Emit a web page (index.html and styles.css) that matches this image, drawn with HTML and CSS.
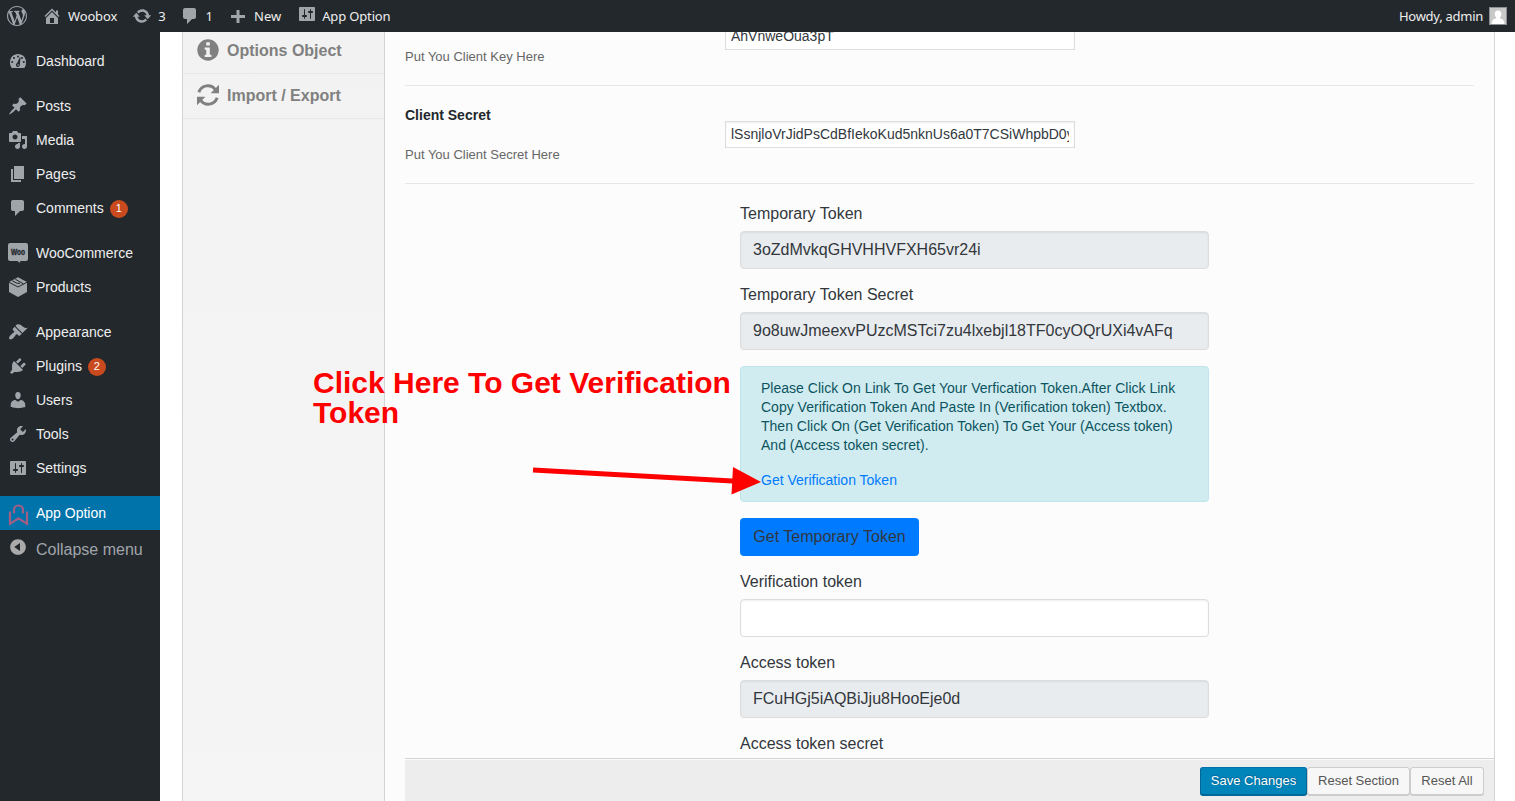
FILE: index.html
```html
<!DOCTYPE html>
<html lang="en">
<head>
<meta charset="utf-8">
<title>App Option</title>
<link rel="stylesheet" href="styles.css">
</head>
<body>
<svg class="defs" width="0" height="0">
  <symbol id="gear" viewBox="0 0 20 20"><path d="M18 16V4c0-.55-.45-1-1-1H3c-.55 0-1 .45-1 1v12c0 .55.45 1 1 1h14c.55 0 1-.45 1-1zM8 11h1c.55 0 1 .45 1 1s-.45 1-1 1H8v1.500c0 .28-.22.5-.5.5s-.5-.22-.5-.5V13H6c-.55 0-1-.45-1-1s.45-1 1-1h1V5.500c0-.28.22-.5.5-.5s.5.22.5.5V11zm5-2h-1c-.55 0-1-.45-1-1s.45-1 1-1h1V5.500c0-.28.22-.5.5-.5s.5.22.5.5V7h1c.55 0 1 .45 1 1s-.45 1-1 1h-1v5.500c0 .28-.22.5-.5.5s-.5-.22-.5-.5V9z"/></symbol>
  <symbol id="bubble" viewBox="0 0 20 20"><path d="M5 2h9c1.100 0 2 .9 2 2v7c0 1.100-.9 2-2 2h-2l-5 5v-5H5c-1.100 0-2-.9-2-2V4c0-1.100.9-2 2-2z"/></symbol>
</svg>
<header class="bar">
  <div class="bar-item logo"><svg viewBox="0 0 20 20"><path d="M20 10c0-5.510-4.490-10-10-10C4.480 0 0 4.490 0 10c0 5.520 4.480 10 10 10 5.510 0 10-4.480 10-10zM7.780 15.370L4.370 6.220c.55-.02 1.170-.08 1.170-.08.5-.06.44-1.130-.06-1.110 0 0-1.450.11-2.370.11-.18 0-.37 0-.58-.01C4.120 2.690 6.870 1.110 10 1.110c2.330 0 4.450.87 6.050 2.340-.68-.11-1.650.39-1.650 1.580 0 .74.45 1.360.9 2.100.35.61.55 1.360.55 2.460 0 1.490-1.400 5-1.400 5l-3.030-8.370c.54-.02.82-.17.82-.17.5-.05.44-1.250-.06-1.220 0 0-1.440.12-2.380.12-.87 0-2.330-.12-2.330-.12-.5-.03-.56 1.200-.06 1.220l.92.08 1.260 3.410zM17.410 10c.24-.64.74-1.870.43-4.250.7 1.290 1.050 2.710 1.050 4.250 0 3.290-1.730 6.240-4.400 7.780.97-2.590 1.940-5.200 2.920-7.780zM6.100 18.090C3.120 16.650 1.110 13.530 1.110 10c0-1.300.23-2.480.72-3.590C3.250 10.300 4.670 14.200 6.100 18.090zm4.030-6.630l2.580 6.980c-.86.29-1.760.45-2.710.45-.79 0-1.570-.11-2.290-.33.81-2.380 1.620-4.740 2.420-7.100z"/></svg></div>
  <div class="bar-item home"><svg viewBox="0 0 20 20"><path d="M16 8.500l1.530 1.530-1.060 1.060L10 4.600l-6.470 6.490-1.060-1.060L10 2.500l4 4v-2h2v4zm-6-2.460l6 5.990V18H4v-5.970zM12 17v-5H8v5h4z"/></svg><span>Woobox</span></div>
  <div class="bar-item updates"><svg viewBox="0 0 20 20"><path d="M10.200 3.280c3.530 0 6.430 2.610 6.920 6h2.080l-3.500 4-3.500-4h2.320c-.45-1.970-2.210-3.450-4.320-3.450-1.450 0-2.730.71-3.540 1.780L4.950 5.660C6.230 4.200 8.110 3.280 10.200 3.280zm-.4 13.440c-3.520 0-6.430-2.610-6.920-6H.8l3.500-4c1.170 1.330 2.330 2.670 3.500 4H5.480c.45 1.970 2.210 3.450 4.320 3.450 1.450 0 2.730-.71 3.540-1.780l1.710 1.950c-1.280 1.460-3.150 2.380-5.250 2.380z"/></svg><span>3</span></div>
  <div class="bar-item replies"><svg viewBox="0 0 20 20"><use href="#bubble"/></svg><span>1</span></div>
  <div class="bar-item new"><svg viewBox="0 0 20 20"><path d="M17 9v3h-5.500v5h-3v-5H3V9h5.500V4h3v5z"/></svg><span>New</span></div>
  <div class="bar-item option"><svg viewBox="0 0 20 20"><use href="#gear"/></svg><span>App Option</span></div>
  <div class="bar-item account"><span>Howdy, admin</span><svg class="avatar" viewBox="0 0 18 18"><path fill="#8c8f94" d="M0 0h18v18H0z"/><path fill="#c8c8c8" d="M1 1h16v16H1z"/><path fill="#fff" d="M9 3.500c2.500 0 3.600 1.700 3.300 4-.2 1.300-.8 2.200-1.300 2.800v1c2.800.6 4.300 2.200 4.500 5.700h-13c.2-3.500 1.700-5.100 4.500-5.700v-1C6.500 9.700 5.900 8.800 5.700 7.500c-.3-2.300.8-4 3.300-4z"/></svg></div>
</header>
<div class="shell">
  <nav class="menu">
    <div class="item"><svg viewBox="0 0 20 20"><path d="M3.760 17h12.480c1.340-1.630 1.760-3.730 1.760-6 0-4.410-3.580-8-8-8s-8 3.590-8 8c0 2.270.42 4.370 1.760 6z"/><g class="cut"><circle cx="10" cy="5.500" r="1"/><circle cx="6" cy="7" r="1"/><circle cx="14" cy="7" r="1"/><circle cx="4.200" cy="11" r="1"/><circle cx="15.800" cy="11" r="1"/><path d="M11.800 6.200l.8.300-.8 6.800a2 2 0 1 1-2.600-1.200z"/></g><circle cx="10" cy="14" r=".8"/></svg><span>Dashboard</span></div>
    <div class="item gap"><svg viewBox="0 0 20 20"><path d="M10.440 3.020l1.820-1.820 6.360 6.350-1.830 1.820c-1.050-.68-2.480-.57-3.410.36l-.75.75c-.92.93-1.040 2.350-.35 3.410l-1.830 1.820-2.410-2.410-2.800 2.790c-.42.42-3.380 2.710-3.800 2.290s1.860-3.390 2.280-3.810l2.790-2.790L4.100 9.360l1.830-1.820c1.050.69 2.480.57 3.400-.36l.75-.75c.93-.92 1.050-2.350.36-3.410z"/></svg><span>Posts</span></div>
    <div class="item"><svg viewBox="0 0 20 20"><path d="M13 11V4c0-.55-.45-1-1-1h-1.670L9 1H5L3.670 3H2c-.55 0-1 .45-1 1v7c0 .55.45 1 1 1h10c.55 0 1-.45 1-1zM7 4.500c1.380 0 2.500 1.120 2.500 2.500S8.380 9.500 7 9.500 4.500 8.380 4.500 7 5.620 4.500 7 4.500zM14 6h5v10.500c0 1.380-1.120 2.500-2.500 2.500S14 17.880 14 16.500s1.120-2.500 2.500-2.500c.17 0 .34.02.5.05V9h-3V6zm-4 8.050V13h2v3.500c0 1.380-1.120 2.500-2.500 2.500S7 17.880 7 16.500 8.120 14 9.500 14c.17 0 .34.02.5.05z"/></svg><span>Media</span></div>
    <div class="item"><svg viewBox="0 0 20 20"><path d="M6 15V2h10v13H6zm-1 1h8v2H3V5h2v11z"/></svg><span>Pages</span></div>
    <div class="item"><svg viewBox="0 0 20 20"><use href="#bubble"/></svg><span>Comments</span><b class="count">1</b></div>
    <div class="item gap"><svg viewBox="0 0 20 20"><path d="M2 0h16a2 2 0 0 1 2 2v14a2 2 0 0 1-2 2h-6l.3 2-3-2H2a2 2 0 0 1-2-2V2a2 2 0 0 1 2-2z"/><text class="woo" x="3" y="11.800" textLength="14" lengthAdjust="spacingAndGlyphs">Woo</text></svg><span>WooCommerce</span></div>
    <div class="item"><svg viewBox="0 0 20 20"><path d="M10 .3l9 4.700v10L10 20l-9-5V5z"/><path class="seam" d="M1 5.300l9 4.700 9-4.700M4.300 3.800l4.500 2.400 3.200.2M7.300 2.200l8 4.600"/></svg><span>Products</span></div>
    <div class="item gap"><svg viewBox="0 0 20 20"><path d="M14.480 11.060L7.410 3.990l1.500-1.500c.5-.56 2.300-.47 3.510.32 1.210.8 1.430 1.280 2.910 2.100 1.180.64 2.450 1.260 4.450.85zm-.71.71L6.700 4.700 4.930 6.470c-.39.39-.39 1.020 0 1.410l1.060 1.060c.39.39.39 1.030 0 1.420-.6.6-1.430 1.110-2.210 1.690-.35.26-.7.53-1.010.84C1.430 14.230.4 16.080 1.400 17.070c.99 1 2.840-.03 4.180-1.360.31-.31.58-.66.85-1.020.57-.78 1.080-1.610 1.690-2.210.39-.39 1.020-.39 1.410 0l1.060 1.060c.39.39 1.020.39 1.410 0z"/></svg><span>Appearance</span></div>
    <div class="item"><svg viewBox="0 0 20 20"><path d="M13.110 4.360L9.870 7.600 8 5.730l3.240-3.240c.35-.34 1.050-.2 1.560.32.52.51.66 1.210.31 1.550zm-8 1.770l.91-1.120 9.010 9.010-1.190.84c-.71.71-2.630 1.160-3.820 1.160H6.140L4.900 17.260c-.59.59-1.540.59-2.120 0-.59-.58-.59-1.530 0-2.120l1.240-1.240v-3.880c0-1.130.4-3.190 1.090-3.890zm7.260 3.970l3.240-3.240c.34-.35 1.040-.21 1.550.31.52.51.66 1.210.31 1.550l-3.240 3.250z"/></svg><span>Plugins</span><b class="count">2</b></div>
    <div class="item"><svg viewBox="0 0 20 20"><path d="M10 9.250c-2.270 0-2.730-3.440-2.730-3.440C7 4.020 7.820 2 9.970 2c2.160 0 2.980 2.020 2.710 3.810 0 0-.41 3.440-2.680 3.440zm0 2.570L12.720 10c2.390 0 4.520 2.330 4.520 4.530v2.490s-3.650 1.130-7.240 1.130c-3.650 0-7.240-1.130-7.240-1.130v-2.490c0-2.250 1.940-4.480 4.470-4.480z"/></svg><span>Users</span></div>
    <div class="item"><svg viewBox="0 0 20 20"><path d="M16.680 9.770c-1.340 1.340-3.300 1.670-4.950.99l-5.410 6.520c-.99.99-2.590.99-3.580 0s-.99-2.590 0-3.570l6.520-5.420c-.68-1.650-.35-3.610.99-4.950 1.280-1.280 3.120-1.620 4.720-1.060l-2.890 2.890 2.820 2.820 2.860-2.870c.53 1.580.18 3.390-1.080 4.650zM3.810 16.210c.4.39 1.040.39 1.430 0 .4-.4.4-1.040 0-1.430-.39-.4-1.030-.4-1.430 0-.39.39-.39 1.030 0 1.430z"/></svg><span>Tools</span></div>
    <div class="item"><svg viewBox="0 0 20 20"><use href="#gear"/></svg><span>Settings</span></div>
    <div class="item gap current"><svg class="brand" viewBox="0 0 20 22"><path d="M5.200 8.500H7M13.800 8.500H15.600M2 7.500v12.300l8.500-5.500 8.500 5.500V7.500M6 9V6a4.500 4.500 0 0 1 9 0V9"/></svg><span>App Option</span></div>
    <div class="item collapse"><svg viewBox="0 0 20 20"><path d="M10 2.160c4.330 0 7.840 3.510 7.840 7.840s-3.510 7.840-7.840 7.840S2.160 14.330 2.160 10 5.710 2.160 10 2.160zm2 11.720V6.120L6.180 9.970z"/></svg><span>Collapse menu</span></div>
  </nav>
  <main class="panel">
    <aside class="tabs">
      <div class="tab tab-first"><svg viewBox="0 0 22 22"><circle cx="11" cy="11" r="10.700"/><path class="hole" d="M9.300 3.300h3.500v3.200H9.300zM7.700 8.500h5.100v7.300h1.600V18H7.700v-2.200h1.600v-5.100H7.700z"/></svg><span>Options Object</span></div>
      <div class="tab tab-sync"><svg viewBox="0 0 22 22"><path class="ring" d="M1.800 8.300C4.600.6 14-.2 18.300 5.600M20.200 13.700C17.400 21.400 8 22.200 3.700 16.400"/><path d="M22 .8v8.400h-8.400zM0 21.200v-8.400h8.400z"/></svg><span>Import / Export</span></div>
    </aside>
    <div class="content">
      <div class="fields">
        <section class="field clipped"><div class="info"><p>Put You Client Key Here</p></div><input class="box" value="AhVnweOua3pT"></section>
        <section class="field"><div class="info"><h4>Client Secret</h4><p>Put You Client Secret Here</p></div><input class="box" value="lSsnjloVrJidPsCdBfIekoKud5nknUs6a0T7CSiWhpbD0yK"></section>
        <div class="form">
          <label>Temporary Token</label><div class="control readonly">3oZdMvkqGHVHHVFXH65vr24i</div>
          <label>Temporary Token Secret</label><div class="control readonly">9o8uwJmeexvPUzcMSTci7zu4lxebjl18TF0cyOQrUXi4vAFq</div>
          <div class="alert"><p>Please Click On Link To Get Your Verfication Token.After Click Link<br>Copy Verification Token And Paste In (Verification token) Textbox.<br>Then Click On (Get Verification Token) To Get Your (Access token)<br>And (Access token secret).</p><a>Get Verification Token</a></div>
          <button class="primary">Get Temporary Token</button>
          <label>Verification token</label><div class="control"></div>
          <label>Access token</label><div class="control readonly">FCuHGj5iAQBiJju8HooEje0d</div>
          <label>Access token secret</label>
        </div>
      </div>
      <footer class="actions"><button class="btn save">Save Changes</button><button class="btn section">Reset Section</button><button class="btn all">Reset All</button></footer>
    </div>
  </main>
</div>
<div class="callout">Click Here To Get Verification<br>Token</div>
<svg class="arrow" viewBox="0 0 232 32"><path d="M1 5l204 11.200" /><path class="head" d="M201 2l28 15-29.500 12.500z"/></svg>
</body>
</html>
```
FILE: styles.css
```css
* { box-sizing: border-box; }
body { margin: 0; height: 801px; overflow: hidden; background: #fff; font-family: "Liberation Sans", Arial, sans-serif; color: #32373c; display: flex; flex-direction: column; }
p, h4 { margin: 0; }
svg { display: block; flex: none; }
.defs { position: absolute; }

.bar { height: 32px; flex: none; background: #23282d; color: #eee; display: flex; font: 13px/32px "Noto Sans", "Open Sans", sans-serif; padding: 0 8px 0 7px; }
.bar-item { display: flex; align-items: center; white-space: nowrap; }
.bar-item svg { width: 20px; height: 20px; fill: #a0a5aa; }
.bar .home { margin-left: 15px; }
.bar .home svg { margin-right: 6px; }
.bar .home span { letter-spacing: -.15px; }
.bar .updates { margin-left: 15px; }
.bar .updates svg { margin-right: 6px; }
.bar .replies { margin-left: 14px; }
.bar .replies svg { margin-right: 6px; }
.bar .new { margin-left: 15px; }
.bar .new svg { margin-right: 6px; }
.bar .option { margin-left: 16px; }
.bar .option svg { margin: 0 5px 4px 0; }
.bar .option span { letter-spacing: -.15px; }
.bar .account { margin-left: auto; }
.bar .account span { letter-spacing: -.27px; }
.bar .account .avatar { width: 18px; height: 18px; margin-left: 6px; }

.shell { display: flex; flex: 1; min-height: 0; }
.menu { width: 160px; flex: none; background: #23282d; padding-top: 12px; color: #eee; font-size: 14px; }
.item { height: 34px; display: flex; align-items: center; padding-left: 8px; }
.item svg { width: 20px; height: 20px; margin-right: 8px; fill: #a0a5aa; overflow: visible; }
.item.gap { margin-top: 11px; }
.item .cut { fill: #23282d; }
.item .seam { fill: none; stroke: #23282d; stroke-width: 1; }
.woo { font: bold 9px "Liberation Sans", sans-serif; fill: #23282d; stroke: #23282d; stroke-width: .4; }
.count { width: 18px; height: 18px; margin: 2px 0 0 6px; border-radius: 9px; background: #ca4a1f; color: #fff; font: 11px/17px "Liberation Sans", sans-serif; text-align: center; }
.item.current { background: #0073aa; color: #fff; }
.item svg.brand { height: 22px; margin-top: 4px; fill: none; stroke: #a35f83; stroke-width: 2.200; }
.collapse { height: 38px; color: #a0a5aa; font-size: 16px; }
.collapse svg { margin-bottom: 4px; fill: #aaa; }
.collapse span { padding-top: 2px; }

.panel { width: 1313px; margin-left: 22px; border: solid #d5d5d5; border-width: 0 1px; background: #fcfcfc; display: flex; overflow: hidden; }
.tabs { width: 202px; flex: none; border-right: 1px solid #d5d5d5; background: linear-gradient(#f2f2f2, #f5f5f5); }
.tab { height: 45px; padding: 1px 0 2px 14px; border-bottom: 1px solid #e7e7e7; display: flex; align-items: center; color: #808080; font-size: 16px; font-weight: bold; }
.tab-first { height: 42px; padding-bottom: 7px; }
.tab-first span { padding-top: 2px; }
.tab svg { width: 22px; height: 22px; margin-right: 8px; fill: #808080; }
.tab-sync svg { margin-bottom: 2px; }
.tab .hole { fill: #f2f2f2; }
.tab .ring { fill: none; stroke: #808080; stroke-width: 3; }

.content { flex: 1; min-width: 0; padding-left: 20px; display: flex; flex-direction: column; }
.fields { height: 726px; padding-right: 20px; overflow: hidden; }
.field { height: 98px; border-bottom: 1px solid #e7e7e7; display: flex; align-items: flex-start; }
.field.clipped { height: 54px; }
.info { width: 320px; flex: none; }
.info h4 { padding-top: 21px; font-size: 14px; line-height: 16px; color: #23282d; }
.info p { padding-top: 24px; font-size: 13px; line-height: 15px; color: #666; }
.clipped .info p { padding-top: 17px; }
.box { width: 350px; height: 27px; margin: 35px 0 0; padding: 0 5px 2px; border: 1px solid #ddd; border-radius: 0; background: #fff; box-shadow: inset 0 1px 2px rgba(0,0,0,.07); color: #32373c; font: 14px "Liberation Sans", sans-serif; }
.clipped .box { margin-top: -9px; }

.form { width: 469px; margin: 20px 0 0 335px; font-size: 16px; }
.form label { display: block; margin-bottom: 8px; line-height: 19px; }
.control { height: 38px; margin-bottom: 16px; padding: 0 12px; border: 1px solid #ddd; border-radius: 4px; background: #fff; box-shadow: inset 0 1px 2px rgba(0,0,0,.07); line-height: 36px; white-space: nowrap; }
.readonly { background: #e9ecef; }
.alert { height: 136px; margin-bottom: 16px; padding: 12px 20px; border: 1px solid #bee5eb; border-radius: 4px; background: #d1ecf1; color: #0c5460; font-size: 14px; line-height: 19px; white-space: nowrap; }
.alert p { margin-bottom: 16px; letter-spacing: .01px; }
.alert a { color: #007bff; }
.primary { display: block; width: 179px; height: 38px; margin-bottom: 16px; padding: 0; border: 0; border-radius: 4px; background: #007bff; color: #32373c; font: 16px "Liberation Sans", sans-serif; }

.actions { height: 43px; flex: none; padding: 8px 10px 0; border-top: 1px solid #d5d5d5; box-shadow: inset 0 1px #fafafa; background: #ededed; display: flex; justify-content: flex-end; }
.btn { height: 28px; padding: 0; border: 1px solid #ccc; border-radius: 3px; background: #f7f7f7; box-shadow: 0 1px 0 #ccc; color: #555; font: 13px/26px "Liberation Sans", sans-serif; }
.btn.save { width: 107px; background: #0085ba; border-color: #0073aa #006799 #006799; box-shadow: 0 1px 0 #006799; color: #fff; text-shadow: 0 -1px 1px #006799, 1px 0 1px #006799; }
.btn.section { width: 103px; }
.btn.all { width: 74px; }

.callout { position: absolute; left: 313px; top: 368px; color: #f00; font-size: 30px; font-weight: bold; line-height: 30px; white-space: nowrap; }
.arrow { position: absolute; left: 532px; top: 465px; width: 232px; height: 32px; fill: none; stroke: #f00; stroke-width: 5; }
.arrow .head { fill: #f00; stroke: none; }
```
